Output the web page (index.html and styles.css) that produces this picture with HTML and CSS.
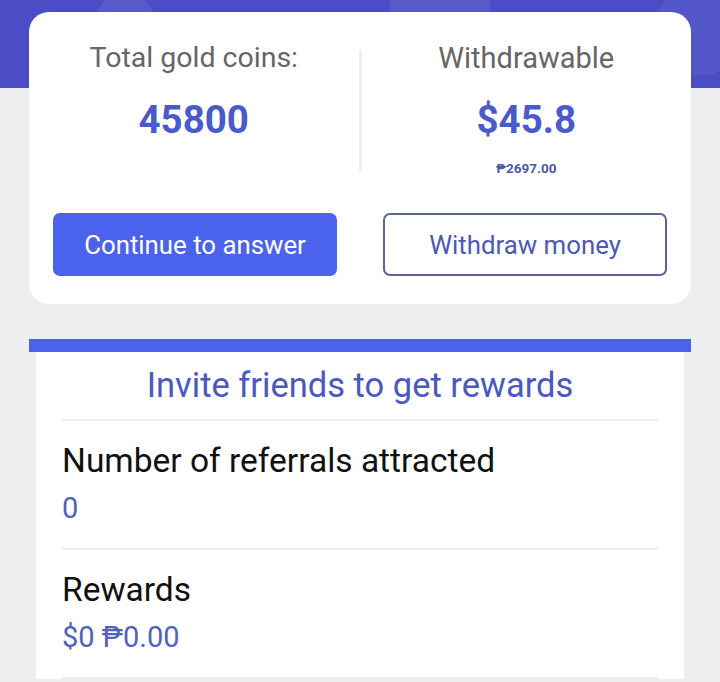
FILE: index.html
```html
<!DOCTYPE html>
<html>
<head>
<meta charset="utf-8">
<link rel="stylesheet" href="styles.css">
</head>
<body>
<div class="page">
  <section class="summary">
    <div class="stats">
      <div class="stat">
        <div class="stat-label">Total gold coins:</div>
        <div class="stat-value">45800</div>
      </div>
      <div class="stat-divider"></div>
      <div class="stat">
        <div class="stat-label stat-label-wide">Withdrawable</div>
        <div class="stat-value">$45.8</div>
        <div class="stat-sub">₱2697.00</div>
      </div>
    </div>
    <div class="actions">
      <button class="btn btn-primary">Continue to answer</button>
      <button class="btn btn-outline">Withdraw money</button>
    </div>
  </section>

  <section class="invite">
    <div class="invite-bar"></div>
    <div class="invite-panel">
      <h2 class="invite-title">Invite friends to get rewards</h2>
      <div class="invite-row">
        <div class="row-label">Number of referrals attracted</div>
        <div class="row-value">0</div>
      </div>
      <div class="invite-row">
        <div class="row-label">Rewards</div>
        <div class="row-value">$0 ₱0.00</div>
      </div>
    </div>
  </section>
</div>
</body>
</html>
```
FILE: styles.css
```css
* { box-sizing: border-box; }
html, body { margin: 0; padding: 0; }
body {
  font-family: Roboto, "Noto Sans", "DejaVu Sans", sans-serif;
  background: #eceef0;
  height: 682px;
  overflow: hidden;
}
.page {
  padding: 12px 29px 0;
  background:
    radial-gradient(circle at 125px 20px, rgba(255,255,255,0.07) 0 28px, transparent 29px),
    radial-gradient(circle at 440px 10px, rgba(255,255,255,0.07) 0 50px, transparent 51px),
    radial-gradient(circle at 700px 30px, rgba(255,255,255,0.06) 0 45px, transparent 46px),
    linear-gradient(#4a4dc5 0 88px, #eceef0 88px);
  min-height: 682px;
}
.summary {
  background: #fff;
  border-radius: 20px;
  padding: 28px 24px 28px;
}
.stats {
  display: grid;
  grid-template-columns: 1fr 3px 1fr;
  margin: 0 -24px;
}
.stat {
  text-align: center;
}
.stat-label {
  font-size: 28.5px;
  line-height: 36px;
  color: #666;
}
.stat-label-wide {
  font-size: 29px;
}
.stat-value {
  margin-top: 22px;
  font-size: 38.5px;
  line-height: 44px;
  font-weight: 700;
  color: #4a5acb;
}
.stat-sub {
  margin-top: 17px;
  font-size: 13.5px;
  line-height: 18px;
  font-weight: 700;
  color: #4d58a8;
}
.stat-divider {
  margin-top: 10px;
  height: 122px;
  background: #efefef;
}
.actions {
  display: grid;
  grid-template-columns: 1fr 1fr;
  gap: 46px;
  margin-top: 36px;
}
.btn {
  height: 63px;
  border-radius: 7px;
  font-family: inherit;
  font-size: 25.8px;
  cursor: pointer;
}
.btn-primary {
  background: #4a62ec;
  color: #fff;
  border: none;
}
.btn-outline {
  background: #fff;
  color: #4e58b5;
  border: 2px solid #5a6497;
}
.invite {
  margin-top: 35px;
}
.invite-bar {
  height: 13px;
  background: #4a62ec;
}
.invite-panel {
  margin: 0 7px;
  background: #fff;
  padding: 0 26px;
}
.invite-title {
  margin: 0;
  font-size: 34.5px;
  font-weight: 400;
  line-height: 67px;
  text-align: center;
  color: #4a58c0;
  border-bottom: 2px solid #eeeeee;
}
.invite-row {
  padding: 20px 0 22px;
  border-bottom: 2px solid #eeeeee;
}
.row-label {
  font-size: 33.5px;
  line-height: 40px;
  color: #111;
}
.row-value {
  margin-top: 9px;
  font-size: 29px;
  line-height: 36px;
  color: #5262b8;
}
```
